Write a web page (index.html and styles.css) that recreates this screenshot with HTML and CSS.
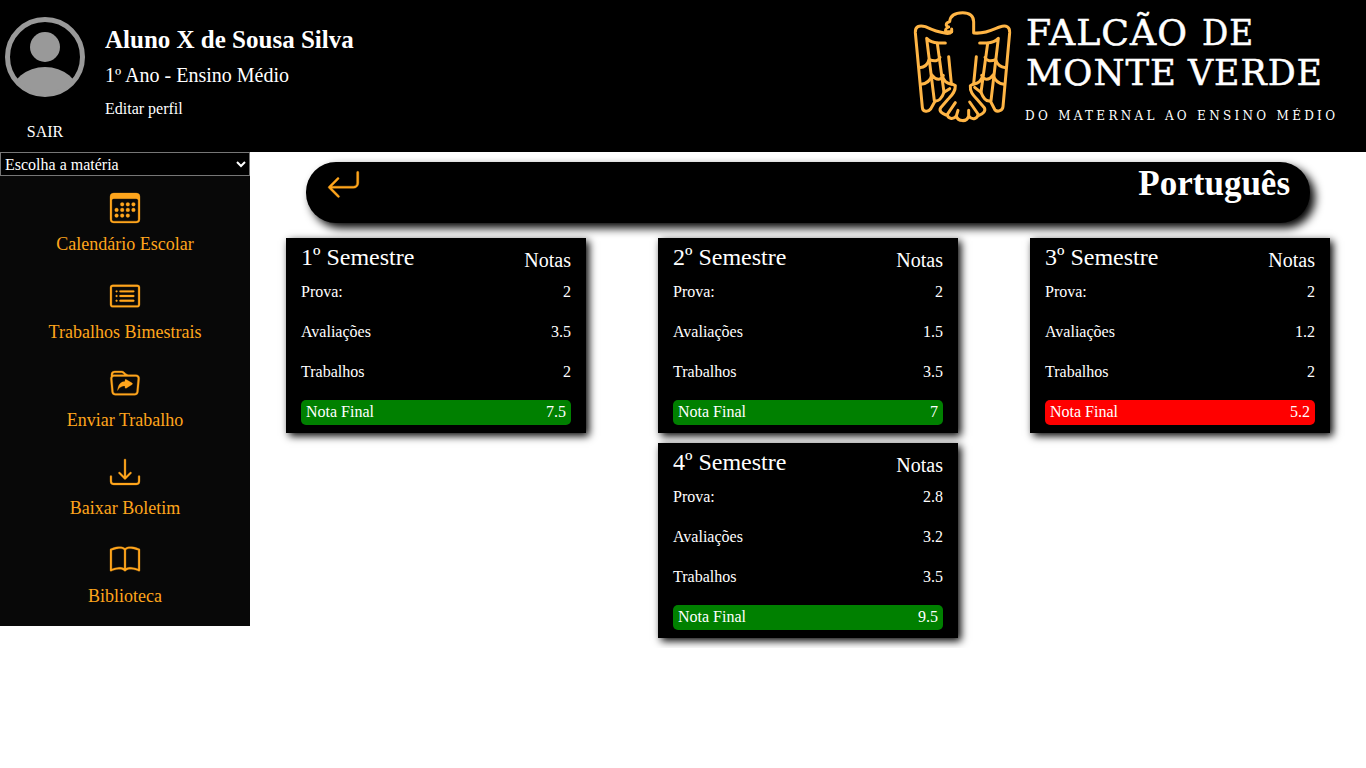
FILE: index.html
```html
<!DOCTYPE html>
<html lang="pt-br">
<head>
<meta charset="utf-8">
<title>Falcão de Monte Verde</title>
<link rel="stylesheet" href="styles.css">
</head>
<body>
<header class="header">
  <div class="profile">
    <div class="profile-side">
      <svg class="avatar" viewBox="0 0 80 80">
        <defs><clipPath id="disc"><circle cx="40" cy="40" r="39"/></clipPath></defs>
        <g fill="#999"><circle cx="40" cy="30" r="15"/><ellipse cx="40" cy="79" rx="34.5" ry="29" clip-path="url(#disc)"/></g>
        <circle cx="40" cy="40" r="37.5" fill="none" stroke="#999" stroke-width="5"/>
      </svg>
      <a class="logout">SAIR</a>
    </div>
    <div class="profile-info">
      <h1 class="student">Aluno X de Sousa Silva</h1>
      <p class="grade">1º Ano - Ensino Médio</p>
      <a class="edit">Editar perfil</a>
    </div>
  </div>
  <svg class="logo" viewBox="0 0 466 152">
    <g transform="scale(.33333)" fill="none" stroke="#ffb545" stroke-width="9" stroke-linecap="round" stroke-linejoin="round">
      <path d="M155 95H137C135 88 137 85 146 81C135 77 137 69 149 65C151 44 168 38 188 38C210 38 221 49 221 65V99C255 102 276 90 299 81C319 74 330 80 329 98L309 320C308 332 293 337 285 330L271 303"/>
      <path d="M155 87V95C150 101 144 101 138 100C111 96 93 88 76 80C57 74 45 80 46 98L67 322C68 337 85 336 92 327L105 304"/>
      <path d="M136 129H114C99 128 87 122 80 115L103 302C115 306 126 295 132 277"/>
      <path d="M112 130L132 277L149 266M146 170L154 251L166 257C167 275 155 286 144 298L122 323C116 333 125 340 138 345"/>
      <path d="M239 129H262C277 128 288 122 295 115L273 302C261 306 250 295 243 277"/>
      <path d="M263 130L243 277L224 262M229 170L221 251L211 257C209 275 220 286 231 298L253 323C258 333 250 341 237 346"/>
      <path d="M58 203C75 202 84 192 87 179M63 253C81 251 91 242 96 225M88 179C107 186 117 181 120 172M95 225C109 243 126 240 130 226M126 226C132 244 139 250 154 253"/>
      <path d="M317 203C300 202 291 192 287 179M312 253C295 251 285 242 279 225M287 179C269 186 258 181 255 172M280 225C266 243 250 240 245 226M249 226C243 244 236 250 221 253"/>
      <path d="M166 308L142 343C143 355 158 361 169 348L174 331M169 348C174 366 201 367 206 348V331M206 348C218 363 234 355 234 342L209 306"/>
    </g>
    <g class="logo-text">
      <text class="logo-name" x="126" y="44.7" textLength="162" lengthAdjust="spacingAndGlyphs">FALCÃO</text>
      <text class="logo-name" x="302" y="44.7" textLength="52" lengthAdjust="spacingAndGlyphs">DE</text>
      <text class="logo-name" x="126" y="84.7" textLength="151" lengthAdjust="spacingAndGlyphs">MONTE</text>
      <text class="logo-name" x="288" y="84.7" textLength="135" lengthAdjust="spacingAndGlyphs">VERDE</text>
      <text class="logo-slogan" x="125" y="120" textLength="310">DO MATERNAL AO ENSINO MÉDIO</text>
    </g>
  </svg>
</header>
<div class="layout">
  <nav class="sidebar">
    <select class="subject"><option>Escolha a matéria</option></select>
    <div class="menu">
      <a class="menu-item"><svg class="icon" viewBox="0 0 16 16"><path d="M14 0H2a2 2 0 0 0-2 2v12a2 2 0 0 0 2 2h12a2 2 0 0 0 2-2V2a2 2 0 0 0-2-2zM1 3.857C1 3.384 1.448 3 2 3h12c.552 0 1 .384 1 .857v10.286c0 .473-.448.857-1 .857H2c-.552 0-1-.384-1-.857V3.857z"/><path d="M6.5 7a1 1 0 1 0 0-2 1 1 0 0 0 0 2zm3 0a1 1 0 1 0 0-2 1 1 0 0 0 0 2zm3 0a1 1 0 1 0 0-2 1 1 0 0 0 0 2zm-9 3a1 1 0 1 0 0-2 1 1 0 0 0 0 2zm3 0a1 1 0 1 0 0-2 1 1 0 0 0 0 2zm3 0a1 1 0 1 0 0-2 1 1 0 0 0 0 2zm3 0a1 1 0 1 0 0-2 1 1 0 0 0 0 2zm-9 3a1 1 0 1 0 0-2 1 1 0 0 0 0 2zm3 0a1 1 0 1 0 0-2 1 1 0 0 0 0 2zm3 0a1 1 0 1 0 0-2 1 1 0 0 0 0 2z"/></svg><span>Calendário Escolar</span></a>
      <a class="menu-item"><svg class="icon" viewBox="0 0 16 16"><path d="M14.5 3a.5.5 0 0 1 .5.5v9a.5.5 0 0 1-.5.5h-13a.5.5 0 0 1-.5-.5v-9a.5.5 0 0 1 .5-.5h13zm-13-1A1.5 1.5 0 0 0 0 3.5v9A1.5 1.5 0 0 0 1.5 14h13a1.5 1.5 0 0 0 1.5-1.5v-9A1.5 1.5 0 0 0 14.5 2h-13z"/><path d="M5 8a.5.5 0 0 1 .5-.5h7a.5.5 0 0 1 0 1h-7A.5.5 0 0 1 5 8zm0-2.5a.5.5 0 0 1 .5-.5h7a.5.5 0 0 1 0 1h-7a.5.5 0 0 1-.5-.5zm0 5a.5.5 0 0 1 .5-.5h7a.5.5 0 0 1 0 1h-7a.5.5 0 0 1-.5-.5zm-1-5a.5.5 0 1 1-1 0 .5.5 0 0 1 1 0zM4 8a.5.5 0 1 1-1 0 .5.5 0 0 1 1 0zm0 2.5a.5.5 0 1 1-1 0 .5.5 0 0 1 1 0z"/></svg><span>Trabalhos Bimestrais</span></a>
      <a class="menu-item"><svg class="icon" viewBox="0 0 16 16"><path d="M11.798 8.271l-3.182 1.97c-.27.166-.616-.036-.616-.372V9.1s-2.571-.3-4 2.4c.571-4.8 3.143-4.8 4-4.8v-.769c0-.336.346-.538.616-.371l3.182 1.969c.27.166.27.576 0 .742z"/><path d="M.5 3l.04.87a1.99 1.99 0 0 0-.342 1.311l.637 7A2 2 0 0 0 2.826 14h10.348a2 2 0 0 0 1.991-1.819l.637-7A2 2 0 0 0 13.81 3H9.828a2 2 0 0 1-1.414-.586l-.828-.828A2 2 0 0 0 6.172 1H2.5a2 2 0 0 0-2 2zm.694 2.09A1 1 0 0 1 2.19 4h11.62a1 1 0 0 1 .996 1.09l-.636 7a1 1 0 0 1-.996.91H2.826a1 1 0 0 1-.995-.91l-.637-7zM6.172 2a1 1 0 0 1 .707.293L7.586 3H2.19c-.24 0-.47.042-.683.12L1.5 2.98a1 1 0 0 1 1-.98h3.672z"/></svg><span>Enviar Trabalho</span></a>
      <a class="menu-item"><svg class="icon" viewBox="0 0 16 16"><path d="M.5 9.9a.5.5 0 0 1 .5.5v2.5a1 1 0 0 0 1 1h12a1 1 0 0 0 1-1v-2.5a.5.5 0 0 1 1 0v2.5a2 2 0 0 1-2 2H2a2 2 0 0 1-2-2v-2.5a.5.5 0 0 1 .5-.5z"/><path d="M7.646 11.854a.5.5 0 0 0 .708 0l3-3a.5.5 0 0 0-.708-.708L8.5 10.293V1.5a.5.5 0 0 0-1 0v8.793L5.354 8.146a.5.5 0 1 0-.708.708l3 3z"/></svg><span>Baixar Boletim</span></a>
      <a class="menu-item"><svg class="icon" viewBox="0 0 16 16"><path d="M1 2.828c.885-.37 2.154-.769 3.388-.893 1.33-.134 2.458.063 3.112.752v9.746c-.935-.53-2.12-.603-3.213-.493-1.18.12-2.37.461-3.287.811V2.828zm7.5-.141c.654-.689 1.782-.886 3.112-.752 1.234.124 2.503.523 3.388.893v9.923c-.918-.35-2.107-.692-3.287-.81-1.094-.111-2.278-.039-3.213.492V2.687zM8 1.783C7.015.936 5.587.81 4.287.94c-1.514.153-3.042.672-3.994 1.105A.5.5 0 0 0 0 2.5v11a.5.5 0 0 0 .707.455c.882-.4 2.303-.881 3.68-1.02 1.409-.142 2.59.087 3.223.877a.5.5 0 0 0 .78 0c.633-.79 1.814-1.019 3.222-.877 1.378.139 2.8.62 3.681 1.02A.5.5 0 0 0 16 13.5v-11a.5.5 0 0 0-.293-.455c-.952-.433-2.48-.952-3.994-1.105C10.413.809 8.985.936 8 1.783z"/></svg><span>Biblioteca</span></a>
    </div>
  </nav>
  <main class="content">
    <div class="banner">
      <svg class="back" viewBox="0 0 16 16"><path d="M14.5 1.5a.5.5 0 0 1 .5.5v4.8a2.5 2.5 0 0 1-2.5 2.5H2.707l3.347 3.346a.5.5 0 0 1-.708.708l-4.2-4.2a.5.5 0 0 1 0-.708l4-4a.5.5 0 1 1 .708.708L2.707 8.3H12.5A1.5 1.5 0 0 0 14 6.8V2a.5.5 0 0 1 .5-.5z"/></svg>
      <h2 class="banner-title">Português</h2>
    </div>
    <div class="cards">
      <section class="card">
        <div class="card-head"><span>1º Semestre</span><span class="notes">Notas</span></div>
        <div class="row"><span>Prova:</span><span>2</span></div>
        <div class="row"><span>Avaliações</span><span>3.5</span></div>
        <div class="row"><span>Trabalhos</span><span>2</span></div>
        <div class="final"><span>Nota Final</span><span>7.5</span></div>
      </section>
      <section class="card">
        <div class="card-head"><span>2º Semestre</span><span class="notes">Notas</span></div>
        <div class="row"><span>Prova:</span><span>2</span></div>
        <div class="row"><span>Avaliações</span><span>1.5</span></div>
        <div class="row"><span>Trabalhos</span><span>3.5</span></div>
        <div class="final"><span>Nota Final</span><span>7</span></div>
      </section>
      <section class="card">
        <div class="card-head"><span>3º Semestre</span><span class="notes">Notas</span></div>
        <div class="row"><span>Prova:</span><span>2</span></div>
        <div class="row"><span>Avaliações</span><span>1.2</span></div>
        <div class="row"><span>Trabalhos</span><span>2</span></div>
        <div class="final failed"><span>Nota Final</span><span>5.2</span></div>
      </section>
      <section class="card">
        <div class="card-head"><span>4º Semestre</span><span class="notes">Notas</span></div>
        <div class="row"><span>Prova:</span><span>2.8</span></div>
        <div class="row"><span>Avaliações</span><span>3.2</span></div>
        <div class="row"><span>Trabalhos</span><span>3.5</span></div>
        <div class="final"><span>Nota Final</span><span>9.5</span></div>
      </section>
    </div>
  </main>
</div>
</body>
</html>
```
FILE: styles.css
```css
* { box-sizing: border-box; margin: 0; padding: 0; }
body { font: 16px/20px "Liberation Serif", "Times New Roman", serif; background: #fff; color: #fff; }

.header { height: 152px; background: #000; display: flex; justify-content: space-between; }
.profile { display: flex; }
.profile-side { width: 90px; padding-top: 17px; display: flex; flex-direction: column; align-items: center; gap: 25px; }
.avatar { width: 80px; height: 80px; }
.profile-info { padding: 25px 0 0 15px; }
.student { font-size: 25px; line-height: 30px; }
.grade { font-size: 20px; line-height: 26px; margin: 7px 0 11px; }
.edit { display: block; }
.logo { width: 466px; height: 152px; }
.logo-text { fill: #fff; font-family: "DejaVu Serif", serif; }
.logo-name { font-size: 36px; letter-spacing: 1px; stroke: #fff; stroke-width: .5px; }
.logo-slogan { font-size: 12px; }

.layout { display: flex; align-items: flex-start; }
.sidebar { width: 250px; height: 474px; background: #080808; flex: none; }
.subject { display: block; width: 250px; height: 24px; font: inherit; color: #fff; background: #000; border: 1px solid #767676; border-radius: 0; }
.menu { padding-top: 17px; }
.menu-item { height: 88px; display: flex; flex-direction: column; align-items: center; gap: 11px; color: #ffa51c; font-size: 18px; }
.icon { width: 30px; height: 30px; fill: currentColor; stroke: currentColor; stroke-width: .15; overflow: visible; }

.content { flex: 1; padding-top: 10px; }
.banner { height: 61px; margin: 0 56px 15px; padding: 0 20px; display: flex; justify-content: space-between; background: #000; border-radius: 30px; box-shadow: 5px 5px 10px #000; }
.back { width: 35px; height: 35px; margin-top: 6px; fill: #ffa51c; stroke: #ffa51c; stroke-width: .15; }
.banner-title { font-size: 35px; line-height: 43px; }
.cards { display: flex; flex-wrap: wrap; justify-content: space-around; }
.card { width: 300px; height: 195px; margin: 0 36px 10px; padding: 5px 15px 0; background: #000; box-shadow: 3px 3px 8px #000; }
.card-head { height: 39px; display: flex; justify-content: space-between; font-size: 24px; line-height: 28px; }
.notes { font-size: 20px; line-height: 35px; }
.row { height: 40px; display: flex; justify-content: space-between; }
.row:nth-child(4) { height: 38px; }
.final { height: 25px; padding: 0 5px; display: flex; justify-content: space-between; line-height: 23px; background: green; border-radius: 5px; }
.failed { background: red; }
```
